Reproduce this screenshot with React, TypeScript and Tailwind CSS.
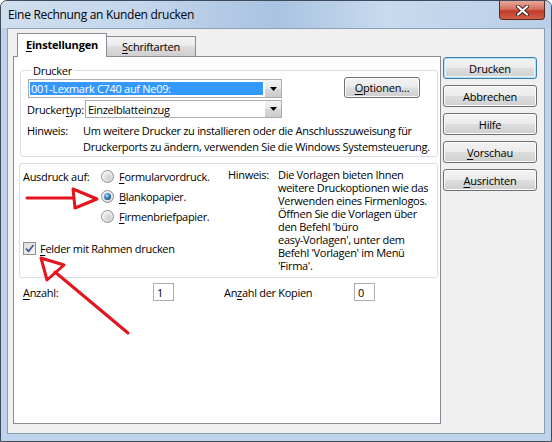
import React from 'react';

const ui = "font-['Open_Sans','Noto_Sans',sans-serif]";

function U({ children }: { children: React.ReactNode }) {
  return <span className="underline decoration-1 underline-offset-[2px]">{children}</span>;
}

function Button({
  children,
  primary = false,
  className = '',
}: {
  children: React.ReactNode;
  primary?: boolean;
  className?: string;
}) {
  return (
    <button
      type="button"
      className={`flex items-center justify-center rounded-[3px] border text-[11px] leading-none tracking-[-0.2px] text-black bg-[linear-gradient(#f3f3f3,#ebebeb_48%,#dddddd_52%,#cfcfcf)] ${
        primary
          ? 'border-[#3c7fb1] shadow-[inset_0_0_0_1px_#b4def5,inset_0_0_0_2px_#eaf6fd]'
          : 'border-[#707070] shadow-[inset_0_0_0_1px_#fbfbfb]'
      } ${className}`}
    >
      {children}
    </button>
  );
}

function Combo({
  value,
  selected = false,
  className = '',
}: {
  value: string;
  selected?: boolean;
  className?: string;
}) {
  return (
    <div className={`flex border border-[#abadb3] bg-white ${className}`}>
      <div
        className={`my-[2px] ml-[1px] flex flex-1 items-center pl-[1px] text-[11px] leading-none ${
          selected ? 'bg-[#3399ff] text-white' : 'text-black'
        }`}
      >
        {value}
      </div>
      <div className="ml-[2px] flex w-[16px] items-center justify-center bg-[linear-gradient(#f4f4f4,#e6e6e6_50%,#d8d8d8_50%,#cbcbcb)]">
        <svg width="7" height="4" viewBox="0 0 7 4">
          <path d="M0 0h7L3.5 4z" fill="#000" />
        </svg>
      </div>
    </div>
  );
}

function Radio({ checked = false }: { checked?: boolean }) {
  return (
    <div className="flex h-[13px] w-[13px] items-center justify-center rounded-full border border-[#8e8f8f] bg-[radial-gradient(circle_at_65%_70%,#cfcfcf,#f6f6f6_80%)]">
      {checked && (
        <div className="h-[7px] w-[7px] rounded-full bg-[radial-gradient(circle_at_40%_35%,#a8dcf8,#2c6ea3_55%,#0e3a66)] shadow-[0_0_0_1px_#dcebf5]" />
      )}
    </div>
  );
}

function Input({ value }: { value: string }) {
  return (
    <div className="flex h-[18px] w-[21px] items-center border border-[#abadb3] bg-white pl-[3px] text-[11px] leading-none">
      {value}
    </div>
  );
}

export default function App() {
  return (
    <div
      className={`relative flex h-[442px] w-[552px] flex-col overflow-hidden rounded-t-[7px] border border-[#3d4b5c] bg-[#bfd4ec] text-black ${ui}`}
    >
      {/* title bar */}
      <div className="flex h-[27px] items-center bg-[linear-gradient(90deg,#d0dff0,#c3d6ec_25%,#a9c3e1_50%,#c7daee_70%,#b9cee7)] pl-[7px]">
        <div className="flex-1 text-[12px] leading-none tracking-[-0.3px]">Eine Rechnung an Kunden drucken</div>
        <div className="mr-[6px] flex h-[19px] w-[46px] self-start items-center justify-center rounded-b-[4px] border border-t-0 border-[#5b2720] bg-[linear-gradient(#e9a99a,#d5705f_45%,#c13b28_55%,#d0604a)]">
          <svg width="13" height="11" viewBox="0 0 13 11">
            <path d="M2 1.5l9 8M11 1.5l-9 8" stroke="#40221d" strokeWidth="4" strokeLinecap="round" />
            <path d="M2 1.5l9 8M11 1.5l-9 8" stroke="#fff" strokeWidth="2.2" strokeLinecap="round" />
          </svg>
        </div>
      </div>

      {/* client area */}
      <div className="mx-[6px] mb-[7px] flex flex-1 border border-[#8a9db3] bg-[#f0f0f0] tracking-[-0.3px]">
        {/* tab control */}
        <div className="flex w-[433px] flex-col pb-[9px] pl-[5px] pt-[4px]">
          <div className="flex h-[23px] items-end pl-[4px]">
            <div className="relative z-10 -mb-px flex h-[24px] w-[90px] items-center justify-center border border-b-0 border-[#898c95] bg-white pb-[2px] text-[11px] font-bold leading-none tracking-[-0.2px]">
              <U>E</U>instellungen
            </div>
            <div className="-ml-px flex h-[20px] w-[90px] items-center justify-center border border-b-0 border-[#898c95] bg-[linear-gradient(#f3f3f3,#ebebeb_50%,#dddddd_50%,#cfcfcf)] text-[11px] leading-none tracking-[-0.2px]">
              <U>S</U>chriftarten
            </div>
          </div>
          <div className="flex w-[428px] flex-1 flex-col border border-[#898c95] bg-white text-[11px]">
            {/* Drucker group */}
            <fieldset className="ml-[6px] mt-[6px] w-[418px] rounded-[3px] border border-[#d5dfe5] pb-[1px] pl-[7px]">
              <legend className="ml-[3px] h-[15px] px-[2px] leading-[15px]">Drucker</legend>
              <div className="mt-[1px] flex h-[19px] items-start">
                <Combo value="001-Lexmark C740 auf Ne09:" selected className="h-[19px] w-[254px]" />
                <Button className="-mt-[2px] ml-[62px] h-[21px] w-[76px]">
                  <U>O</U>ptionen...
                </Button>
              </div>
              <div className="mt-[2px] flex items-center">
                <div className="-ml-px w-[58px] leading-none">
                  Drucker<U>t</U>yp:
                </div>
                <Combo value="Einzelblatteinzug" className="h-[18px] w-[197px]" />
              </div>
              <div className="mt-[5px] flex leading-[16px]">
                <div className="-ml-px w-[56px]">Hinweis:</div>
                <div className="whitespace-nowrap">
                  Um weitere Drucker zu installieren oder die Anschlusszuweisung für
                  <br />
                  Druckerports zu ändern, verwenden Sie die Windows Systemsteuerung.
                </div>
              </div>
            </fieldset>

            {/* Ausdruck group */}
            <div className="ml-[5px] mt-[6px] flex h-[115px] w-[419px] rounded-[3px] border border-[#d5dfe5] pl-[3px] pt-[2px]">
              <div className="flex w-[205px] flex-col">
                <div className="flex">
                  <div className="flex h-[20px] w-[78px] items-center leading-none">Ausdruck auf:</div>
                  <div className="flex flex-col">
                    {[
                      ['F', 'ormularvordruck.', false],
                      ['B', 'lankopapier.', true],
                      ['F', 'irmenbriefpapier.', false],
                    ].map(([first, rest, on], i) => (
                      <div key={i} className="flex h-[20px] items-center gap-[5px] leading-none">
                        <Radio checked={on as boolean} />
                        <span>
                          <U>{first as string}</U>
                          {rest as string}
                        </span>
                      </div>
                    ))}
                  </div>
                </div>
                <div className="mt-[12px] flex h-[20px] items-center gap-[4px] leading-none">
                  <div className="flex h-[13px] w-[13px] items-center justify-center border border-[#8e8f8f] bg-[linear-gradient(135deg,#dcdcdc,#f7f7f7)]">
                    <svg width="11" height="11" viewBox="0 0 11 11">
                      <path d="M2 5.5l2.5 2.8L9.5 2" fill="none" stroke="#4a5f97" strokeWidth="1.8" />
                    </svg>
                  </div>
                  <span>
                    <U>F</U>elder mit Rahmen drucken
                  </span>
                </div>
              </div>
              <div className="w-[50px] pt-[2px] leading-[13px]">Hinweis:</div>
              <div className="whitespace-nowrap pt-[2px] leading-[13px]">
                Die Vorlagen bieten Ihnen
                <br />
                weitere Druckoptionen wie das
                <br />
                Verwenden eines Firmenlogos.
                <br />
                Öffnen Sie die Vorlagen über
                <br />
                den Befehl 'büro
                <br />
                easy-Vorlagen', unter dem
                <br />
                Befehl 'Vorlagen' im Menü
                <br />
                'Firma'.
              </div>
            </div>

            {/* Anzahl row */}
            <div className="mt-[5px] flex items-center pl-[9px] leading-none">
              <div className="w-[130px]">
                <U>A</U>nzahl:
              </div>
              <Input value="1" />
              <div className="ml-[50px] w-[130px]">
                An<U>z</U>ahl der Kopien
              </div>
              <Input value="0" />
            </div>
          </div>
        </div>

        {/* buttons */}
        <div className="ml-[2px] flex flex-col gap-[6px] pt-[28px]">
          <Button primary className="h-[22px] w-[94px]">
            Drucken
          </Button>
          <Button className="h-[22px] w-[94px]">Abbrechen</Button>
          <Button className="h-[22px] w-[94px]">Hilfe</Button>
          <Button className="h-[22px] w-[94px]">
            <U>V</U>orschau
          </Button>
          <Button className="h-[22px] w-[94px]">
            <U>A</U>usrichten
          </Button>
        </div>
      </div>

      {/* red annotation arrows */}
      <svg
        className="pointer-events-none absolute left-[-1px] top-[-1px]"
        width="552"
        height="442"
        viewBox="0 0 552 442"
      >
        <g fill="none" stroke="#e3141b" strokeWidth="3" strokeLinejoin="round" strokeLinecap="round">
          <path d="M27 198L73 198" />
          <path d="M73 189L97 199L75 208Z" />
          <path d="M55 272L128 333" />
          <path d="M41 258L64 265L47 280Z" />
        </g>
      </svg>
    </div>
  );
}
